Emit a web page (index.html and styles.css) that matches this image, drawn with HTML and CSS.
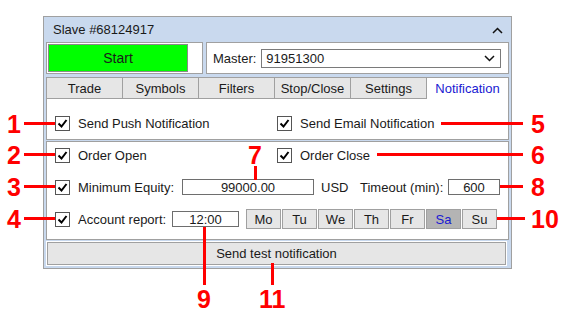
FILE: index.html
```html
<!DOCTYPE html>
<html lang="en">
<head>
    <meta charset="UTF-8">
    <title>Slave notification settings</title>
    <link rel="stylesheet" href="styles.css">
</head>
<body>
    <div class="page">
        <div class="panel">
            <div class="panel-head">
                <span>Slave #68124917</span>
                <svg class="caret" width="11" height="7" viewBox="0 0 11 7"><polyline points="1,6 5.5,1.5 10,6" fill="none" stroke="#111" stroke-width="1.5"/></svg>
            </div>

            <div class="top-row">
                <div class="box start-box">
                    <button class="start">Start</button>
                </div>
                <div class="box master-box">
                    <span>Master:</span>
                    <div class="select">
                        <span>91951300</span>
                        <svg width="11" height="7" viewBox="0 0 11 7"><polyline points="1,1 5.5,5.5 10,1" fill="none" stroke="#111" stroke-width="1.5"/></svg>
                    </div>
                </div>
            </div>

            <div class="box notify">
                <div class="tabs">
                    <div class="tab">Trade</div>
                    <div class="tab">Symbols</div>
                    <div class="tab">Filters</div>
                    <div class="tab">Stop/Close</div>
                    <div class="tab">Settings</div>
                    <div class="tab active">Notification</div>
                </div>
                <div class="row first">
                    <label class="cell"><span class="check"></span>Send Push Notification</label>
                    <label><span class="check"></span>Send Email Notification</label>
                </div>
            </div>

            <div class="box options">
                <div class="row">
                    <label class="cell"><span class="check"></span>Order Open</label>
                    <label><span class="check"></span>Order Close</label>
                </div>
                <div class="row">
                    <span class="check"></span>
                    <span class="lbl equity-lbl">Minimum Equity:</span>
                    <div class="input equity">99000.00</div>
                    <span class="usd">USD</span>
                    <span class="timeout-lbl">Timeout (min):</span>
                    <div class="input timeout">600</div>
                </div>
                <div class="row">
                    <span class="check"></span>
                    <span class="lbl report-lbl">Account report:</span>
                    <div class="input time">12:00</div>
                    <div class="days">
                        <span class="day">Mo</span>
                        <span class="day">Tu</span>
                        <span class="day">We</span>
                        <span class="day">Th</span>
                        <span class="day">Fr</span>
                        <span class="day on">Sa</span>
                        <span class="day">Su</span>
                    </div>
                </div>
            </div>

            <button class="test">Send test notification</button>
        </div>

        <!-- callouts -->
        <div class="hline" style="left:24px;top:122px;width:31px"></div>
        <div class="hline" style="left:24px;top:153px;width:31px"></div>
        <div class="hline" style="left:24px;top:185px;width:31px"></div>
        <div class="hline" style="left:24px;top:217px;width:31px"></div>
        <div class="hline" style="left:441px;top:122px;width:82px"></div>
        <div class="hline" style="left:377px;top:153px;width:146px"></div>
        <div class="hline" style="left:500px;top:185px;width:23px"></div>
        <div class="hline" style="left:497px;top:217px;width:28px"></div>
        <div class="vline" style="left:254px;top:166px;height:14px"></div>
        <div class="vline" style="left:203px;top:227px;height:58px"></div>
        <div class="vline" style="left:271px;top:263px;height:22px"></div>

        <span class="num" style="left:7px;top:112px">1</span>
        <span class="num" style="left:7px;top:143px">2</span>
        <span class="num" style="left:7px;top:175px">3</span>
        <span class="num" style="left:7px;top:207px">4</span>
        <span class="num" style="left:531px;top:112px">5</span>
        <span class="num" style="left:531px;top:143px">6</span>
        <span class="num" style="left:248px;top:143px">7</span>
        <span class="num" style="left:531px;top:175px">8</span>
        <span class="num" style="left:197px;top:287px">9</span>
        <span class="num" style="left:531px;top:207px">10</span>
        <span class="num" style="left:259px;top:287px">11</span>
    </div>
</body>
</html>
```

FILE: styles.css
```css
body {
    margin: 0;
    font-family: "Liberation Sans", Arial, sans-serif;
    font-size: 13px;
    color: #1a1a1a;
    background: #fff;
}

.page {
    position: relative;
    width: 570px;
    height: 317px;
    box-sizing: border-box;
    padding: 16px 0 0 43px;
    overflow: hidden;
}

.panel {
    width: 469px;
    height: 253px;
    box-sizing: border-box;
    border: 1px solid #a0a0a0;
    background: #c9d9ee;
    padding: 0 2px;
}

.panel-head {
    height: 24px;
    display: flex;
    align-items: center;
    justify-content: space-between;
    padding: 0 6px 0 7px;
}

.caret {
    margin-top: 3px;
}

.box {
    box-sizing: border-box;
    border: 1px solid #a0a0a0;
    background: #fff;
}

.top-row {
    display: flex;
    gap: 3px;
    height: 32px;
    margin-top: 1px;
}

.start-box {
    width: 157px;
    padding: 1px 0 0 1px;
}

.start {
    width: 140px;
    height: 28px;
    background: #00ff00;
    border: 1px solid #8a8a8a;
    font-family: inherit;
    font-size: 14px;
    color: #1a1a1a;
    padding: 0;
}

.master-box {
    flex: 1;
    display: flex;
    align-items: center;
    padding: 0 7px 0 6px;
}

.select {
    margin-left: 5px;
    flex: 1;
    height: 19px;
    box-sizing: border-box;
    border: 1px solid #7a7a7a;
    display: flex;
    align-items: center;
    justify-content: space-between;
    padding: 0 5px 0 4px;
}

.notify {
    margin-top: 3px;
    height: 63px;
}

.tabs {
    display: flex;
    height: 21px;
}

.tab {
    width: 76px;
    box-sizing: border-box;
    background: #e6e6e6;
    border-right: 1px solid #a0a0a0;
    border-bottom: 1px solid #a0a0a0;
    display: flex;
    align-items: center;
    justify-content: center;
}

.tab.active {
    flex: 1;
    background: #fff;
    border: none;
    color: #1a1ad2;
}

.row {
    display: flex;
    align-items: center;
    height: 20px;
    padding-left: 8px;
}

.row.first {
    margin-top: 14px;
}

.row label {
    display: flex;
    align-items: center;
}

.row .cell {
    width: 222px;
}

.check {
    width: 15px;
    height: 15px;
    box-sizing: border-box;
    border: 1px solid #555;
    margin-right: 8px;
    flex: none;
    background: #fff url("data:image/svg+xml,%3Csvg xmlns='http://www.w3.org/2000/svg' width='13' height='13'%3E%3Cpolyline points='2.5,6.5 5.5,9.5 10.5,3' fill='none' stroke='%23000' stroke-width='2'/%3E%3C/svg%3E") center no-repeat;
}

.options {
    margin-top: 1px;
    height: 99px;
    padding-top: 3px;
    display: flex;
    flex-direction: column;
    gap: 12px;
}

.input {
    box-sizing: border-box;
    height: 16px;
    border: 1px solid #6e6e6e;
    display: flex;
    align-items: center;
    justify-content: center;
    background: #fff;
}

.equity-lbl {
    width: 104px;
}

.equity {
    width: 132px;
}

.usd {
    width: 39px;
    margin-left: 7px;
}

.timeout-lbl {
    width: 88px;
}

.timeout {
    width: 52px;
}

.report-lbl {
    width: 94px;
}

.time {
    width: 67px;
}

.days {
    display: flex;
    gap: 1px;
    margin-left: 7px;
}

.day {
    width: 35px;
    height: 20px;
    box-sizing: border-box;
    border: 1px solid #a0a0a0;
    background: #e6e6e6;
    display: flex;
    align-items: center;
    justify-content: center;
}

.day.on {
    background: #b4b4b4;
    color: #1a1ad2;
}

.test {
    display: block;
    margin: 2px 0 0 1px;
    width: 459px;
    height: 23px;
    border: 1px solid #a0a0a0;
    background: #e6e6e6;
    font-family: inherit;
    font-size: 13px;
    color: #1a1a1a;
    box-shadow: 0 0 0 1px #fff;
}

.hline,
.vline {
    position: absolute;
    background: #ff0000;
}

.hline {
    height: 3px;
}

.vline {
    width: 3px;
}

.num {
    position: absolute;
    font-size: 25px;
    line-height: 25px;
    font-weight: bold;
    color: #ff0000;
}
```
